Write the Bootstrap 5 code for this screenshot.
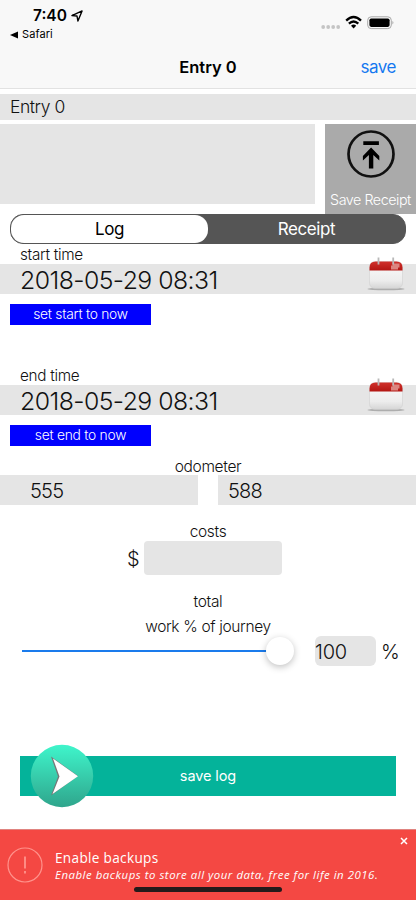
<!DOCTYPE html>
<html lang="en">
<head>
<meta charset="utf-8">
<meta name="viewport" content="width=device-width, initial-scale=1">
<title>Entry 0</title>
<link href="https://cdn.jsdelivr.net/npm/bootstrap@5.3.0/dist/css/bootstrap.min.css" rel="stylesheet">
<style>
body{font-family:Inter,"Liberation Sans",sans-serif;font-weight:300;color:#111;background:#fff;height:900px;overflow:hidden;line-height:1}
.screen{width:416px;height:900px}
svg{display:block;flex:none}
.top-bar{height:89px;background:#f8f8f8;border-bottom:1px solid #e2e2e2}
.status{height:24px;padding:8px 22px 0 33px}
.clock{font-size:15.5px;font-weight:600;color:#000;line-height:16px}
.loc{margin:2px 0 0 4px}
.signals{margin-top:7px}
.back-link{height:21px;padding-left:10px;font-size:11px;font-weight:400;color:#000;letter-spacing:.1px}
.title-row{height:45px;display:grid;grid-template-columns:1fr auto 1fr;align-items:center}
.title-row h1{font-size:16.5px;font-weight:600;margin:0;padding-top:1px;color:#000}
.title-row a{font-size:17px;font-weight:400;color:#1578f0;text-decoration:none;padding-right:20px;letter-spacing:-.5px}
.fill{background:#e5e5e5}
.entry-name{height:26px;margin-top:5px;padding-left:10px;font-size:17.5px;letter-spacing:-.45px}
.note-row{height:90px;margin-top:4px}
.note{width:315px;height:80px}
.receipt-tile{width:91px;height:90px;background:#aaa;color:#fff;font-size:14.3px;letter-spacing:-.45px}
.receipt-tile svg{margin-top:5px}
.receipt-tile span{margin-top:14px}
.segments{height:30px;margin:0 10px;background:#555;border:1px solid #555;border-radius:13px;font-size:17px;font-weight:400;letter-spacing:-.4px}
.segments div{padding-top:1px}
.segments .on{background:#fff;color:#000;border-radius:13px}
.segments .off{color:#fff}
.time-block{height:121px}
.time-block.ending{height:92px}
.field-label{height:20px;padding-left:20px;font-size:15.3px;line-height:22px;letter-spacing:-.3px}
.stamp{height:30px;padding:0 9px 0 20px;font-size:24.8px;letter-spacing:-.55px}
.stamp span{padding-top:3px}
.stamp svg{margin-bottom:8px}
.now-btn{width:141px;height:21px;margin:10px 0 0 10px;background:#0000fe;color:#fff;border:0;padding:1px 0 0;font-size:13.8px;font-weight:300;letter-spacing:-.25px}
.caption-line{font-size:15.5px;text-align:center;line-height:18px;letter-spacing:-.35px;height:18px;padding-top:1px}
.odo{height:30px;font-size:20px;letter-spacing:-.8px}
.odo div{width:198px;padding-top:2px}
.odo .from{padding-left:30px}
.odo .to{padding-left:10px}
.costs-cap{margin-top:17px}
.cost-row{height:34px;margin:1px 0 0 127px;font-size:20px}
.cost-row span{width:17px;padding-top:2px}
.cost-box{width:138px;height:34px;border-radius:4px}
.total-cap{margin-top:17px}
.work-cap{margin-top:7px}
.slider-row{height:30px;margin-top:1px;padding-left:22px;font-size:20px}
.pct-box{width:61px;height:30px;border-radius:6px;margin-left:21px;padding-top:2px;letter-spacing:-.2px}
.pct-sign{margin-left:5px;padding-top:2px}
.track{width:258px;height:2px;background:#1a7bec}
.knob{width:28px;height:28px;border-radius:50%;background:#fff;box-shadow:0 2px 7px rgba(0,0,0,.25);margin-left:-14px}
.save-bar{height:40px;margin:90px 20px 0;padding-top:1px;background:#04b39a;color:#fff;font-size:14.5px;font-weight:400;letter-spacing:-.1px}
.go{left:10px;top:-12px}
.notice{height:71px;margin-top:33px;padding:19px 0 0 7px;background:#f44843;border-top:1px solid #e08480;color:#fff;font-family:"Open Sans",sans-serif;font-weight:400}
.notice-icon{margin-top:-2px}
.notice-body{margin-left:12px}
.notice-title{font-size:13.6px;line-height:18px;letter-spacing:.32px}
.notice-text{font-size:11.4px;line-height:15px;font-style:italic;white-space:nowrap;letter-spacing:.53px}
.home-bar{width:148px;height:5px;border-radius:3px;background:#231a1a;left:134px;top:57px}
.dismiss{right:8px;top:7px}
</style>
</head>
<body>
<svg width="0" height="0" class="position-absolute">
  <defs>
    <linearGradient id="page" x2="0" y2="1"><stop stop-color="#fafafa"/><stop offset=".7" stop-color="#ededed"/><stop offset="1" stop-color="#d5d5d5"/></linearGradient>
    <linearGradient id="redtop" x2="0" y2="1"><stop stop-color="#d0312b"/><stop offset="1" stop-color="#b31613"/></linearGradient>
    <linearGradient id="ball" x2="0" y2="1"><stop stop-color="#3ff5cb"/><stop offset="1" stop-color="#2fa58c"/></linearGradient>
    <symbol id="calendar" viewBox="0 0 40 40">
      <ellipse cx="20" cy="34" rx="18.500" ry="1.300" fill="#999" opacity=".75"/>
      <rect x="3.500" y="6.500" width="33" height="27" rx="5.500" fill="url(#page)" stroke="#ccc" stroke-width=".5"/>
      <path d="M3.500 15.500v-3Q3.500 6.500 9.500 6.500h21q6 0 6 6v3z" fill="url(#redtop)"/>
      <path d="M26.500 8.500h7v4H32v2h-7v-4h1.500z" fill="#dc8580"/>
      <path d="M12.500 2.500v7M27.200 2.500v7" stroke="#b9b9b9" stroke-width="1.800"/>
    </symbol>
  </defs>
</svg>
<main class="screen d-flex flex-column">
  <header class="top-bar">
    <div class="status d-flex justify-content-between">
      <div class="d-flex"><span class="clock">7:40</span>
        <svg width="12" height="12" viewBox="0 0 13 13" class="loc"><path d="M1 6 12 1 7.500 12 6.500 6.500Z" fill="none" stroke="#000" stroke-width="1.500" stroke-linejoin="round"/></svg></div>
      <svg width="74" height="16" viewBox="0 0 74 16" class="signals">
        <g fill="#c4c4c4"><circle cx="3.200" cy="12" r="1.900"/><circle cx="8.200" cy="12" r="1.900"/><circle cx="13.200" cy="12" r="1.900"/><circle cx="18.200" cy="12" r="1.900"/></g>
        <g fill="none" stroke="#000" stroke-width="2.300"><path d="M26.200 5.600Q33.600-1.600 41 5.600"/><path d="M28.900 8.700Q33.600 4.400 38.300 8.700"/></g><path d="M31 10.800Q33.600 8.400 36.200 10.800L33.600 13.500Z"/>
        <rect x="47.700" y="1.800" width="23.600" height="11.800" rx="3.500" fill="none" stroke="#a8a8a8"/><rect x="49.400" y="3.500" width="20.200" height="8.400" rx="1.800"/><path d="M72.500 6q1.800 1.700 0 3.400z" fill="#999"/>
      </svg>
    </div>
    <div class="back-link d-flex align-items-center"><svg width="8" height="8" viewBox="0 0 8 8" class="me-1"><path d="M0 4 8 .5v7z"/></svg><span>Safari</span></div>
    <div class="title-row"><span></span><h1>Entry 0</h1><a href="#" class="text-end">save</a></div>
  </header>

  <div class="fill entry-name d-flex align-items-center"><span>Entry 0</span></div>
  <div class="note-row d-flex justify-content-between">
    <div class="fill note"></div>
    <div class="receipt-tile d-flex flex-column align-items-center">
      <svg width="50" height="50" viewBox="0 0 50 50"><circle cx="25" cy="25" r="22.500" fill="none" stroke="#111" stroke-width="2.700"/><path d="M17.300 12.300h15.600v3.700H17.300zM25.100 18.500l8.200 8.500v4.500l-6-5.500v13.500h-4.400V26l-6 5.500V27z"/></svg>
      <span>Save Receipt</span>
    </div>
  </div>

  <div class="segments d-flex">
    <div class="on w-50 d-flex align-items-center justify-content-center">Log</div>
    <div class="off w-50 d-flex align-items-center justify-content-center">Receipt</div>
  </div>

  <section class="time-block">
    <div class="field-label">start time</div>
    <div class="fill stamp d-flex align-items-center justify-content-between"><span>2018-05-29 08:31</span>
      <svg width="42" height="40" viewBox="0 0 40 40"><use href="#calendar"/></svg></div>
    <button class="now-btn d-flex align-items-center justify-content-center">set start to now</button>
  </section>
  <section class="time-block ending">
    <div class="field-label">end time</div>
    <div class="fill stamp d-flex align-items-center justify-content-between"><span>2018-05-29 08:31</span>
      <svg width="42" height="40" viewBox="0 0 40 40"><use href="#calendar"/></svg></div>
    <button class="now-btn d-flex align-items-center justify-content-center">set end to now</button>
  </section>

  <div class="caption-line">odometer</div>
  <div class="odo d-flex justify-content-between">
    <div class="fill from d-flex align-items-center">555</div>
    <div class="fill to d-flex align-items-center">588</div>
  </div>

  <div class="caption-line costs-cap">costs</div>
  <div class="cost-row d-flex align-items-center"><span>$</span><div class="fill cost-box"></div></div>

  <div class="caption-line total-cap">total</div>
  <div class="caption-line work-cap">work % of journey</div>
  <div class="slider-row d-flex align-items-center">
    <div class="track"></div><div class="knob"></div>
    <div class="fill pct-box d-flex align-items-center">100</div>
    <span class="pct-sign">%</span>
  </div>

  <div class="save-bar position-relative d-flex align-items-center justify-content-center">
    <svg class="go position-absolute" width="64" height="64" viewBox="0 0 64 64"><circle cx="32" cy="32" r="31.200" fill="url(#ball)"/><path d="M21 12.500 48 32 21 51.500 28 32.500Z" fill="#777"/><path d="M23 14.500 48 32.200 22.500 50 29.500 32.500Z" fill="#fff"/></svg>
    save log
  </div>

  <footer class="notice position-relative d-flex">
    <svg class="notice-icon" width="36" height="36" viewBox="0 0 36 36" fill="none" stroke="#ff938c"><circle cx="18" cy="18" r="17" stroke-width="1.200"/><path d="M18 9.500v12M18 24v2.500" stroke-width="1.800"/></svg>
    <div class="notice-body"><div class="notice-title">Enable backups</div><div class="notice-text">Enable backups to store all your data, free for life in 2016.</div></div>
    <svg class="dismiss position-absolute" width="8" height="8" viewBox="0 0 8 8"><path d="M1 1l6 6M7 1 1 7" stroke="#fff" stroke-width="1.500"/></svg>
    <div class="home-bar position-absolute"></div>
  </footer>
</main>
<script src="https://cdn.jsdelivr.net/npm/bootstrap@5.3.0/dist/js/bootstrap.bundle.min.js"></script>
</body>
</html>
